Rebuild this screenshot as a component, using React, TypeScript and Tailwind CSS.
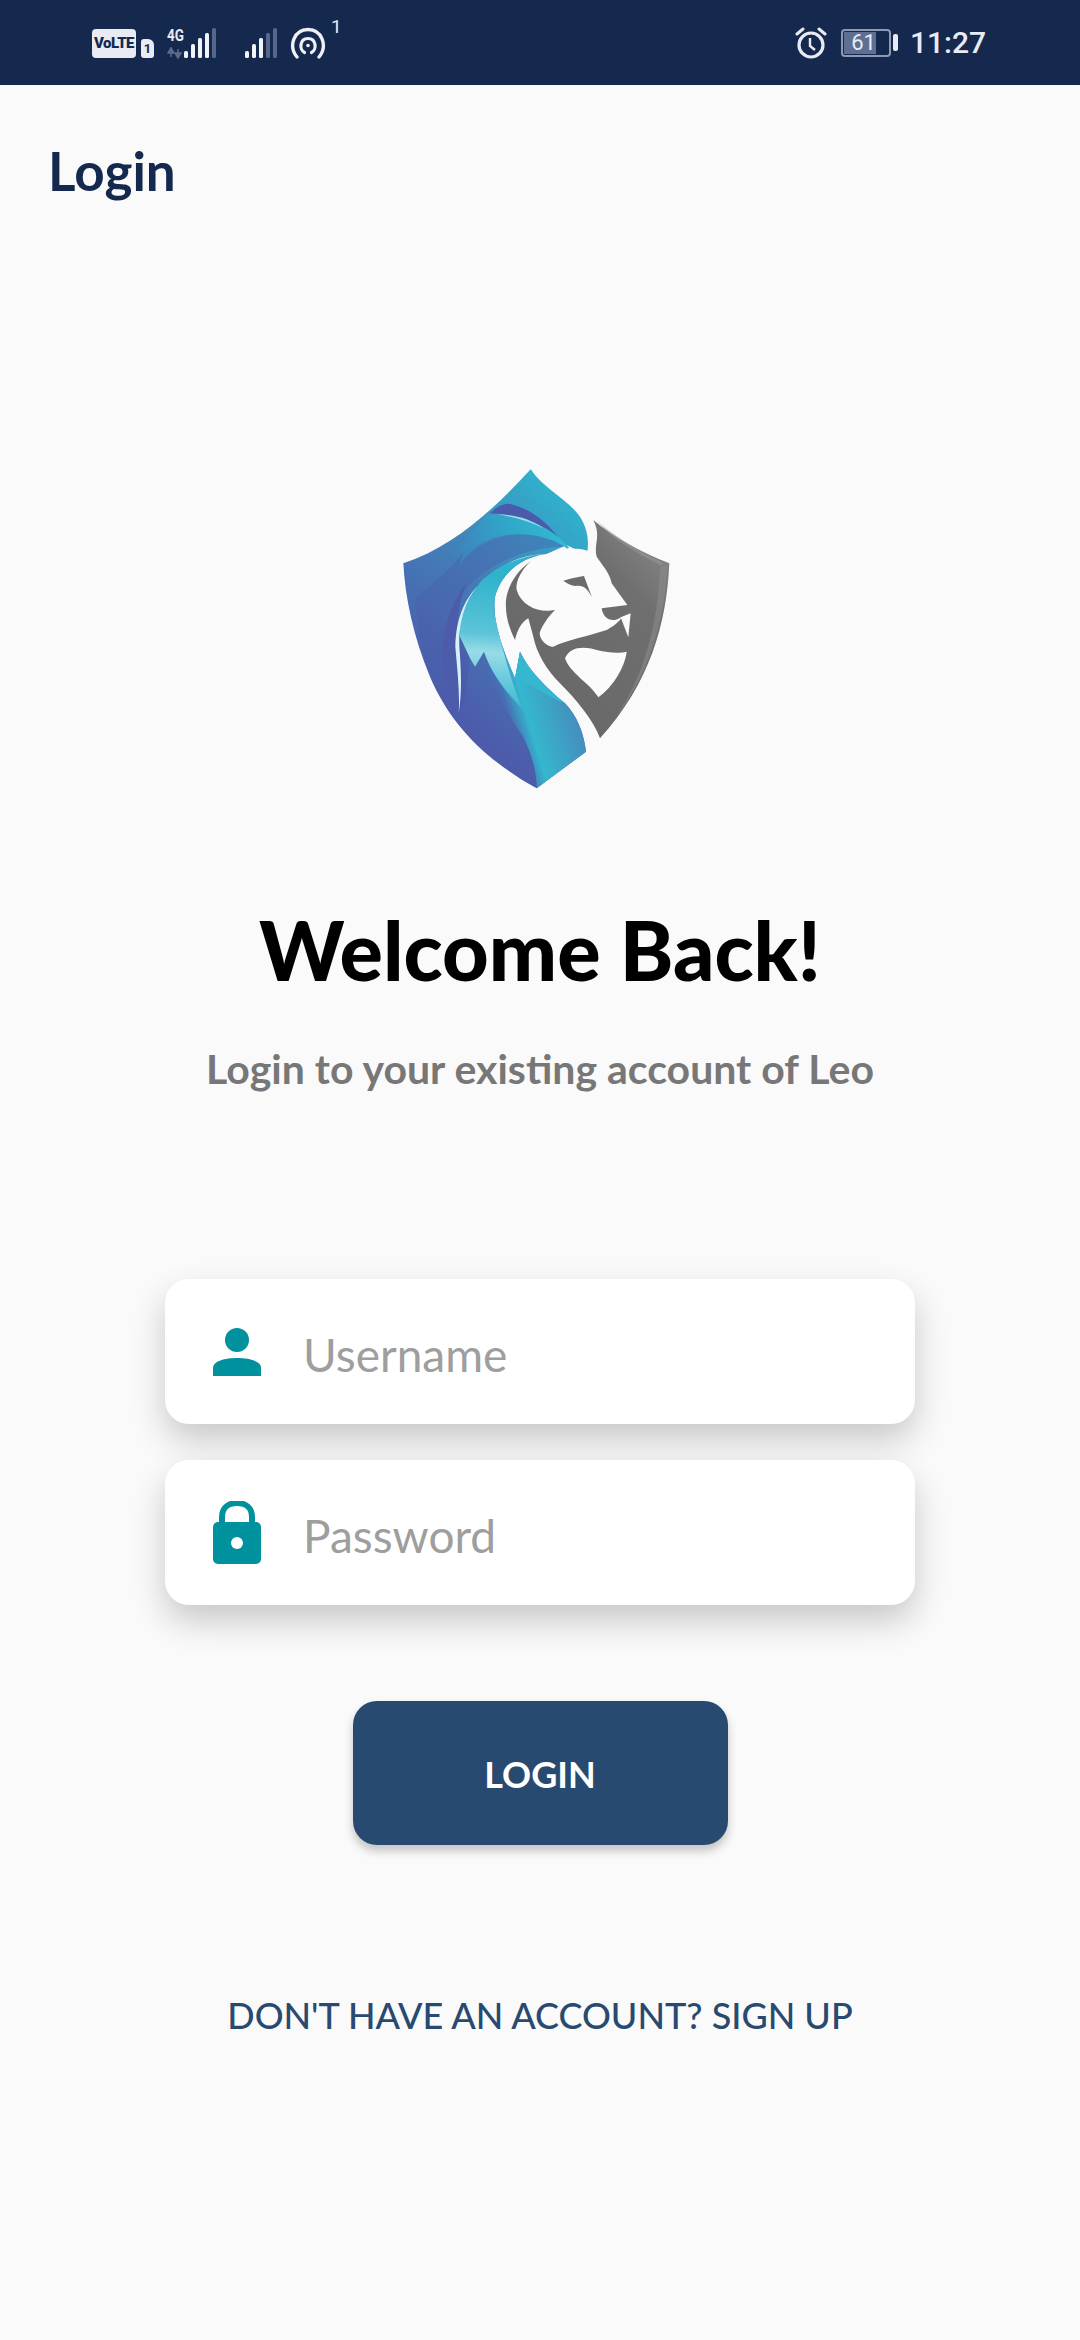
import React from "react";

function BarSet({ xs, litCount }: { xs: number[]; litCount: number }) {
  const heights = [7, 14, 20, 25, 30];
  return (
    <>
      {xs.map((x, i) => (
        <rect key={x} x={x} y={31 - heights[i]} width="4" height={heights[i]} rx="1.5" fill={i < litCount ? "#f1f3f7" : "#56678a"} />
      ))}
    </>
  );
}

function SignalSim1() {
  return (
    <svg width="50" height="32" viewBox="0 0 50 32" className="block">
      <text x="0" y="14" fontSize="16" fontWeight="700" fill="#e8ebf2" fontFamily="Roboto, sans-serif" textLength="17" lengthAdjust="spacingAndGlyphs">4G</text>
      <path d="M4 21v9M4 21l-3 5h6ZM11 31v-9M11 31l-3-5h6Z" stroke="#5a6a8c" strokeWidth="1.5" fill="#5a6a8c" />
      <BarSet xs={[17, 24, 31, 38, 45]} litCount={4} />
    </svg>
  );
}

function Signal2() {
  return (
    <svg width="33" height="32" viewBox="0 0 33 32" className="block">
      <BarSet xs={[0, 7, 14, 21, 28]} litCount={3} />
    </svg>
  );
}

function Hotspot() {
  return (
    <svg width="36" height="32" viewBox="0 0 36 32" className="block">
      <path d="M7 30C-2 19 4 2.5 18 2.5S38 19 29 30" fill="none" stroke="#eef0f5" strokeWidth="3.4" strokeLinecap="round" />
      <path d="M14.5 25.5C9 23 9.5 11.5 18 11.5s9 11.5 3.5 14" fill="none" stroke="#eef0f5" strokeWidth="3.2" strokeLinecap="round" />
      <circle cx="18" cy="18.5" r="1.8" fill="#eef0f5" />
    </svg>
  );
}

function Alarm() {
  return (
    <svg width="32" height="32" viewBox="0 0 32 32" className="block">
      <circle cx="16" cy="18" r="12" fill="none" stroke="#e8ebf2" strokeWidth="3.2" />
      <path d="M15 11v8l5 4" fill="none" stroke="#e8ebf2" strokeWidth="2.4" />
      <path d="M2 7l6-5M30 7l-6-5" stroke="#e8ebf2" strokeWidth="3" strokeLinecap="round" />
    </svg>
  );
}

function Logo() {
  return (
    <svg width="320" height="350" viewBox="0 0 960 1050" className="block">
      <defs>
        <linearGradient id="base" gradientUnits="userSpaceOnUse" x1="150" y1="700" x2="620" y2="180">
          <stop offset="0" stopColor="#4c5cab" />
          <stop offset="0.55" stopColor="#4184ba" />
          <stop offset="1" stopColor="#2fb4cd" />
        </linearGradient>
        <linearGradient id="wave" gradientUnits="userSpaceOnUse" x1="180" y1="400" x2="560" y2="240">
          <stop offset="0" stopColor="#4372b4" />
          <stop offset="0.6" stopColor="#31a6c8" />
          <stop offset="1" stopColor="#2fbdd2" />
        </linearGradient>
        <linearGradient id="tail" gradientUnits="userSpaceOnUse" x1="300" y1="850" x2="620" y2="754">
          <stop offset="0" stopColor="#4a5bab" />
          <stop offset="0.3" stopColor="#4670b3" />
          <stop offset="0.45" stopColor="#35b7cf" />
          <stop offset="1" stopColor="#4a82b8" />
        </linearGradient>
        <linearGradient id="mane" gradientUnits="userSpaceOnUse" x1="350" y1="380" x2="320" y2="760">
          <stop offset="0" stopColor="#2fb3cc" />
          <stop offset="0.45" stopColor="#5cc4d8" />
          <stop offset="0.6" stopColor="#98dbe8" />
          <stop offset="1" stopColor="#3cbad1" />
        </linearGradient>
        <linearGradient id="gray" x1="1" y1="0" x2="0.3" y2="0.9">
          <stop offset="0" stopColor="#8c8c8c" />
          <stop offset="0.35" stopColor="#6f6f6f" />
          <stop offset="1" stopColor="#686868" />
        </linearGradient>
      </defs>
      <path d="M452 58C490 115 565 150 600 200C625 240 628 280 620 315L560 285L500 312C430 320 365 365 345 440C335 510 365 590 405 685L420 605C445 660 500 715 555 760C590 795 612 850 618 905L470 1015C310 925 210 820 150 680C100 560 75 440 70 340C220 290 340 180 452 58Z" fill="url(#base)" />
      <path d="M105 450C150 400 210 365 250 305L238 350C270 290 350 250 440 250C490 255 530 270 555 290C440 290 330 340 265 410C215 460 190 540 188 620C190 680 210 735 236 790C190 730 160 690 140 640C120 570 110 510 105 450Z" fill="#4a5dab" opacity="0.4" />
      <path d="M188 650C182 560 205 470 262 395C235 450 228 530 230 590C236 660 240 730 236 790C210 750 192 710 188 650Z" fill="#4d5bab" />
      <path d="M330 190C355 165 380 155 400 165C460 180 510 225 548 280C480 225 400 190 330 190Z" fill="#4a5bab" />
      <path d="M320 195C410 190 500 220 560 285C575 295 560 300 555 290C490 250 400 240 320 270C285 285 255 315 238 350L250 305C220 325 200 335 180 345C225 315 275 250 320 195Z" fill="url(#wave)" />
      <path d="M350 193C400 193 450 205 490 235C450 215 400 200 350 193Z" fill="#9fdde9" />
      <path d="M490 312C420 320 350 345 300 400C250 450 230 510 228 590C235 660 240 730 236 790C262 760 262 670 270 625L285 650L312 605C330 700 380 790 430 860C455 915 470 960 470 1015L618 905C612 850 590 795 555 760C500 715 445 660 420 605L405 685C365 590 335 510 345 440C365 365 430 320 490 312Z" fill="url(#tail)" />
      <path d="M490 312C420 320 350 345 300 400C260 445 235 510 240 560L270 625L285 650L312 605C330 660 370 720 430 780C400 720 365 590 345 500C335 470 340 450 345 440C365 365 430 320 490 312Z" fill="url(#mane)" />
      <path d="M490 312C430 315 370 340 320 380C260 430 235 510 238 590C244 660 246 730 236 790C240 730 232 660 226 590C228 510 250 450 300 400C350 345 420 320 490 312Z" fill="#d5f1f6" />
      <path d="M405 685L420 605C445 660 500 715 555 760C500 740 450 700 405 685Z" fill="#35b7cf" />
      <path d="M640 210C700 262 790 310 868 340C860 520 810 700 660 865C640 810 590 750 540 700C500 660 470 610 460 560L445 505C425 515 412 540 405 570C385 530 375 490 378 450C385 400 415 360 450 335L650 320C640 280 665 260 640 210Z" fill="url(#gray)" />
      <path d="M650 212C710 262 780 305 850 338C845 345 848 350 840 345C770 310 700 270 650 212Z" fill="#9a9a9a" opacity="0.5" />
      <path d="M862 345C855 520 800 690 700 810C790 690 835 520 840 350Z" fill="#8b8b8b" opacity="0.6" />
      <path d="M450 335C430 355 405 390 410 420C425 470 480 490 525 480C510 495 490 520 480 545C475 560 495 590 520 590C560 570 620 560 680 540C700 528 720 515 725 500C700 520 670 510 665 475L742 465L695 400C690 370 670 350 650 320C620 290 570 290 500 312Z" fill="#fbfbfb" />
      <path d="M555 625C570 590 610 588 650 600C690 610 720 610 740 605C735 650 700 710 655 742C630 700 570 670 555 625Z" fill="#fbfbfb" />
      <path d="M722 502L752 490L745 562Z" fill="#fbfbfb" />
      <path d="M550 392C575 385 595 380 612 378L620 400L636 442C625 418 610 403 585 408C570 405 560 400 550 392Z" fill="#6c6c6c" />
    </svg>
  );
}

function Field({ icon, label }: { icon: React.ReactNode; label: string }) {
  return (
    <div className="flex h-[145px] w-[750px] items-center rounded-[24px] bg-white pl-[48px] shadow-[0_16px_34px_rgba(0,0,0,0.2)]">
      <div className="flex h-[72px] w-[48px] items-center justify-center">{icon}</div>
      <span className="ml-[42px] pt-[6px] text-[46px] leading-none text-[#9e9e9e]">{label}</span>
    </div>
  );
}

export default function App() {
  return (
    <div className="flex h-[2340px] w-[1080px] flex-col items-center overflow-hidden bg-[#fafafa] font-[Lato,sans-serif]">
      <div className="flex h-[85px] w-full shrink-0 items-center justify-between bg-[#15294f] pl-[92px] pr-[94px] text-[#e8ebf2]">
        <div className="flex h-[32px] items-end">
          <span className="mb-[1px] flex h-[29px] w-[44px] items-center justify-center rounded-[4px] bg-[#e8ebf2] font-[Roboto,sans-serif] text-[15px] font-black tracking-[-0.5px] text-[#15294f]">VoLTE</span>
          <span className="mb-[1px] ml-[5px] flex h-[19px] w-[13px] items-center justify-center rounded-[3px] rounded-tr-[6px] bg-[#e8ebf2] font-[Roboto,sans-serif] text-[13px] font-bold leading-none text-[#15294f]">1</span>
          <div className="ml-[13px]"><SignalSim1 /></div>
          <div className="ml-[28px]"><Signal2 /></div>
          <div className="ml-[12px]"><Hotspot /></div>
          <span className="-mt-[10px] ml-[5px] self-start font-[Roboto,sans-serif] text-[19px] leading-[20px]">1</span>
        </div>
        <div className="flex h-[32px] items-center">
          <Alarm />
          <div className="ml-[14px] flex h-[28px] w-[50px] items-stretch rounded-[4px] border-2 border-[#8e9ab5] p-[1px]">
            <div className="flex w-[32px] items-center justify-end bg-[#5f6f93] font-[Roboto,sans-serif] text-[22px] leading-none text-[#e8ebf2]">
              <span>61</span>
            </div>
          </div>
          <div className="ml-[2px] h-[17px] w-[5px] rounded-[2px] bg-[#e8ebf2]" />
          <span className="ml-[12px] font-[Roboto,sans-serif] text-[30px] font-medium leading-none">11:27</span>
        </div>
      </div>

      <div className="flex h-[175px] w-full shrink-0 items-start pl-[48px] pt-[56px]">
        <h1 className="text-[53px] font-bold leading-[60px] text-[#15294f]">Login</h1>
      </div>

      <div className="shrink-0 pt-[190px]"><Logo /></div>

      <h2 className="mt-[100px] text-[81px] font-black leading-[100px] text-black">Welcome Back!</h2>
      <p className="mt-[44px] text-[41px] font-bold leading-[50px] text-[#777777]">Login to your existing account of Leo</p>

      <div className="mt-[185px] flex flex-col gap-[36px]">
        <Field
          label="Username"
          icon={
            <svg width="48" height="48" viewBox="0 0 48 48" className="block">
              <circle cx="24" cy="12" r="12" fill="#00919f" />
              <path d="M0 48V40C0 33 12 30 24 30s24 3 24 10v8Z" fill="#00919f" />
            </svg>
          }
        />
        <Field
          label="Password"
          icon={
            <svg width="48" height="64" viewBox="0 0 48 64" className="block">
              <path d="M9 22V16C9 7 15 2 24 2s15 5 15 14v6" fill="none" stroke="#00919f" strokeWidth="6" />
              <rect x="0" y="21" width="48" height="42" rx="5" fill="#00919f" />
              <circle cx="24" cy="42" r="6" fill="#fff" />
            </svg>
          }
        />
      </div>

      <button className="mt-[96px] flex h-[144px] w-[375px] items-center justify-center rounded-[24px] bg-[#284a70] pt-[2px] text-[36px] font-bold text-white shadow-[0_6px_10px_rgba(0,0,0,0.22)]">LOGIN</button>

      <p className="mt-[145px] text-[36px] font-medium leading-[50px] text-[#284a70]">DON'T HAVE AN ACCOUNT? SIGN UP</p>
    </div>
  );
}
